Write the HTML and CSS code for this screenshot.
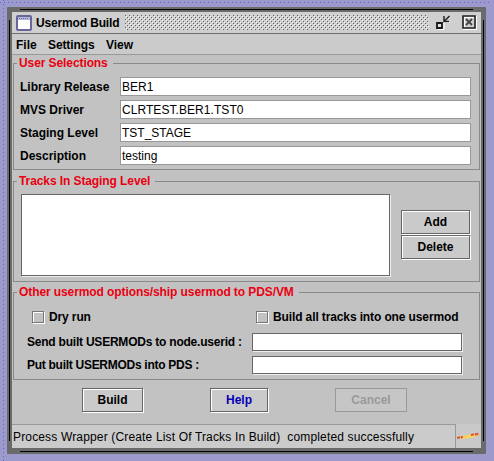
FILE: index.html
```html
<!DOCTYPE html>
<html lang="en">
<head>
<meta charset="utf-8">
<title>Usermod Build</title>
<link rel="stylesheet" href="styles.css">
</head>
<body>
<div class="window">
  <div class="content">
    <header class="titlebar">
      <svg class="app-icon" width="16" height="16" viewBox="0 0 16 16"><rect x="1" y="1" width="14" height="14" rx="1" fill="#fff" stroke="#66669a" stroke-width="2"/><path d="M2 2h12v3H2z" fill="#b8b8dc"/><path d="M3 3.5h10" stroke="#66669a" stroke-dasharray="1 1"/></svg>
      <span class="title">Usermod Build</span>
      <svg class="grip" width="304" height="15"><defs><pattern id="dots" width="4" height="4" patternUnits="userSpaceOnUse"><path d="M0 0h1v1H0zM2 2h1v1H2z" fill="#626262"/><path d="M1 1h1v1H1zM3 3h1v1H3z" fill="#f5f5f5"/></pattern></defs><rect width="304" height="15" fill="url(#dots)"/></svg>
      <svg class="restore" width="15" height="15" viewBox="0 0 15 15" fill="none"><path d="M1.500 14.500h6.500V8M8 7.500h5.500" stroke="#fff"/><path d="M1 8h5v5H1z" fill="#ddd" stroke="#161616" stroke-width="1.800"/><path d="M8 1v5.500h5M8 6.500L13.500 1" stroke="#222" stroke-width="1.500"/></svg>
      <svg class="close" width="15" height="15" viewBox="0 0 15 15" fill="none"><path d="M1 14.500h13.500V1M2.500 12V2.500H12" stroke="#fff"/><path d="M1 1h12v12H1z" stroke="#222" stroke-width="1.600"/><path d="M4 4l6 6M10 4l-6 6" stroke="#444" stroke-width="1.800"/></svg>
    </header>
    <nav class="menu"><span class="m-file">File</span><span class="m-settings">Settings</span><span class="m-view">View</span></nav>
    <main>
      <fieldset class="group selections">
        <legend>User Selections</legend>
        <div class="form">
          <label>Library Release</label><div class="field">BER1</div>
          <label>MVS Driver</label><div class="field clr">CLRTEST.BER1.TST0</div>
          <label>Staging Level</label><div class="field">TST_STAGE</div>
          <label>Description</label><div class="field">testing</div>
        </div>
      </fieldset>
      <fieldset class="group tracks">
        <legend>Tracks In Staging Level</legend>
        <div class="track-row">
          <div class="list"></div>
          <div class="side"><div class="button">Add</div><div class="button">Delete</div></div>
        </div>
      </fieldset>
      <fieldset class="group options">
        <legend>Other usermod options/ship usermod to PDS/VM</legend>
        <div class="checks">
          <div class="check"><i></i><span>Dry run</span></div>
          <div class="check"><i></i><span class="all">Build all tracks into one usermod</span></div>
        </div>
        <div class="ship">
          <label class="send">Send built USERMODs to node.userid :</label><div class="field dark"></div>
          <label class="put">Put built USERMODs into PDS :</label><div class="field dark"></div>
        </div>
      </fieldset>
      <div class="actions">
        <div class="button build">Build</div>
        <div class="button help">Help</div>
        <div class="button cancel">Cancel</div>
      </div>
    </main>
    <footer class="status">
      <div class="message">Process Wrapper (Create List Of Tracks In Build)&nbsp; completed successfully</div>
      <svg width="24" height="24" viewBox="0 0 24 24" fill="none"><path d="M1 13.500L7 13l6-1 10-1.500" stroke="#e8a85c" stroke-width="2"/><path d="M6 13.500l13-2" stroke="#ffd45c" stroke-width="3"/><path d="M1 13.800l6-.8M15 11l8-1.500" stroke="#e04a30" stroke-width="1.800" stroke-dasharray="3 1"/></svg>
    </footer>
  </div>
</div>
</body>
</html>
```
FILE: styles.css
```css
* { box-sizing: border-box; }

body {
  margin: 0;
  padding: 7px;
  width: 494px;
  height: 461px;
  overflow: hidden;
  background:
    repeating-linear-gradient(90deg, #6262dc 0 1px, transparent 1px 4px) 0 2px / 490px 1px no-repeat,
    repeating-linear-gradient(#6262dc 0 1px, transparent 1px 4px) 3px 0 / 1px 461px no-repeat,
    #9c9acd;
  font: bold 12px/14px "Liberation Sans", Arial, sans-serif;
  color: #000;
}

/* The black frame line stops short of the solid corner grips. */
.window {
  width: 479px;
  height: 447px;
  padding: 5px 5px 6px;
  background:
    linear-gradient(#000, #000) 13px 2px / 453px 1px no-repeat,
    linear-gradient(#000, #000) 13px 444px / 453px 1px no-repeat,
    linear-gradient(#000, #000) 2px 13px / 1px 421px no-repeat,
    linear-gradient(#000, #000) 476px 13px / 1px 421px no-repeat,
    #6a6a6a;
  border-radius: 1px;
}

.content {
  height: 436px;
  display: flex;
  flex-direction: column;
  background: #c2c2c2;
}

.titlebar {
  height: 22px;
  flex: none;
  display: flex;
  align-items: center;
  padding-left: 4px;
  background: #cfcfcf;
  border-bottom: 1px solid #707070;
}
.app-icon { margin-right: 4px; }
.title { width: 89px; white-space: nowrap; letter-spacing: -.15px; }
.restore { margin-left: 7px; }
.close { margin-left: 11px; }

.menu {
  height: 21px;
  flex: none;
  display: flex;
  background: #cbcbcb;
  border-bottom: 1px solid #999;
  padding: 4px 0 0 4px;
}
.m-file { width: 32px; }
.m-settings { width: 58px; letter-spacing: -.1px; }

main { padding: 0 1px; height: 369px; flex: none; }

.group {
  margin: 0;
  padding: 0;
  width: 467px;
  border: 1px solid #8a8a8a;
  min-width: 0;
}
legend {
  margin-left: 3px;
  padding: 0 5px 0 2px;
  color: #ea0010;
  height: 14px;
  white-space: nowrap;
  letter-spacing: -.09px;
}
.selections { margin-top: 1px; height: 114px; }
.tracks { margin-top: 4px; height: 108px; }
.options { margin-top: 3px; height: 95px; }

.form {
  display: grid;
  grid-template-columns: 100px 351px;
  grid-auto-rows: 19px;
  row-gap: 4px;
  align-items: center;
  padding: 7px 0 0 6px;
}
.field {
  height: 19px;
  background: #fff;
  border: 1px solid #999;
  padding: 2px 0 0 1px;
  font-weight: normal;
  white-space: nowrap;
}
.clr { letter-spacing: .06px; }
.dark { border-color: #666; box-shadow: 1px 1px 0 #eee; }

.track-row { display: flex; padding: 6px 0 0 7px; }
.list {
  width: 369px;
  height: 82px;
  background: #fff;
  border: 1px solid #666;
  box-shadow: 1px 1px 0 #eee;
}
.side { margin: 16px 0 0 11px; display: flex; flex-direction: column; gap: 1px; }
.button {
  width: 69px;
  height: 24px;
  display: flex;
  align-items: center;
  justify-content: center;
  background: #cacaca;
  border: 1px solid #666;
  box-shadow: inset 1px 1px 0 #fff, 1px 1px 0 #fff;
}

.checks { display: grid; grid-template-columns: 224px 1fr; padding: 11px 0 0 18px; }
.check { display: flex; height: 14px; align-items: center; white-space: nowrap; }
.check i {
  width: 12px;
  height: 12px;
  margin-right: 5px;
  border: 1px solid #777;
  box-shadow: inset 1px 1px 0 #fff, 1px 1px 0 #fff;
}
.check span { letter-spacing: -.12px; }
.ship {
  display: grid;
  grid-template-columns: 225px 210px;
  grid-auto-rows: 18px;
  row-gap: 5px;
  align-items: center;
  white-space: nowrap;
  padding: 9px 0 0 13px;
}
.ship .field { height: 18px; }
.send { letter-spacing: -.22px; }
.put { letter-spacing: -.28px; }

.actions { display: flex; padding: 8px 0 0 69px; }
.build { width: 61px; }
.help { width: 58px; margin-left: 67px; color: #0500b4; }
.cancel {
  width: 72px;
  margin-left: 67px;
  color: #999;
  background: #c6c6c6;
  border-color: #999;
  box-shadow: none;
}

.status { height: 24px; flex: none; display: flex; background: #c9c9c9; }
.message {
  width: 444px;
  border-top: 1px solid #999;
  border-right: 1px solid #999;
  padding: 5px 0 0 1px;
  font-weight: normal;
  letter-spacing: .155px;
  white-space: nowrap;
  background: #cbcbcb;
}
```
